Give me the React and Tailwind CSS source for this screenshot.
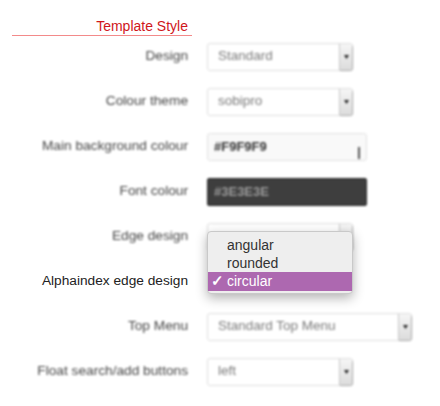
import React from "react";

const font = { fontFamily: '"Liberation Sans", Arial, sans-serif' };

function Arrow() {
  return (
    <div className="w-[13px] h-full border-l border-[#c8c8c8] bg-gradient-to-b from-[#f6f6f6] to-[#dcdcdc] rounded-r-[3px] flex items-center justify-center shadow-[1px_1px_1px_rgba(0,0,0,0.25)]">
      <svg width="5" height="4" viewBox="0 0 5 4">
        <path d="M0 0 L5 0 L2.5 4 Z" fill="#222" />
      </svg>
    </div>
  );
}

function SelectBox({ value, width }) {
  return (
    <div className={`${width} h-[28px] bg-white border border-[#dedede] rounded-[3px] flex items-center justify-between`}>
      <span className="pl-[10px] text-[13.5px] text-[#7a7a7a]">{value}</span>
      <Arrow />
    </div>
  );
}

function Row({ label, children, sharp }) {
  return (
    <div className="flex items-center h-[45px]">
      <div className={`w-[188px] text-right text-[13.7px] ${sharp ? "text-[#222]" : "text-[#444] blur-[1.3px]"}`}>{label}</div>
      <div className="ml-[19px]">{children}</div>
    </div>
  );
}

export default function App() {
  return (
    <div className="w-[440px] h-[406px] bg-white overflow-hidden" style={font}>
      <div className="ml-[12px] w-[180px] h-[36px] flex items-end justify-end pr-[4px] pb-[2px] border-b border-[#f38a8a]">
        <span className="text-[14px] text-[#d0161b] leading-none">Template Style</span>
      </div>
      <div className="-mt-[2px] flex flex-col">
        <Row label="Design">
          <div className="blur-[1.3px]"><SelectBox value="Standard" width="w-[146px]" /></div>
        </Row>
        <Row label="Colour theme">
          <div className="blur-[1.3px]"><SelectBox value="sobipro" width="w-[146px]" /></div>
        </Row>
        <Row label="Main background colour">
          <div className="blur-[1.3px] relative w-[160px] h-[28px] bg-[#f9f9f9] border border-[#e2e2e2] rounded-[3px] flex items-center">
            <span className="pl-[6px] text-[13px] font-bold text-[#333]">#F9F9F9</span>
            <div className="absolute right-[6px] bottom-[1px] w-[2px] h-[12px] bg-[#555]"></div>
          </div>
        </Row>
        <Row label="Font colour">
          <div className="blur-[1.3px] w-[160px] h-[28px] bg-[#3e3e3e] border border-[#2a2a2a] rounded-[2px] flex items-center">
            <span className="pl-[6px] text-[13px] font-bold text-[#9a9a9a]">#3E3E3E</span>
          </div>
        </Row>
        <Row label="Edge design">
          <div className="relative">
            <div className="blur-[1px]"><SelectBox value="" width="w-[146px]" /></div>
            <div className="absolute z-10 left-0 top-[8px] w-[146px] h-[63px] bg-[#eeeeee] border border-[#c9c9c9] rounded-[4px] shadow-[0_4px_12px_rgba(0,0,0,0.3)] pt-[4px] text-[14px] leading-[18px]">
              <div className="pl-[19px] text-[#333]">angular</div>
              <div className="pl-[19px] text-[#333]">rounded</div>
              <div className="flex items-center h-[19px] bg-[#ad68b0] text-white">
                <span className="w-[19px] pl-[3px] text-[15px] font-bold">✓</span>
                <span>circular</span>
              </div>
            </div>
          </div>
        </Row>
        <Row label="Alphaindex edge design" sharp>
          <div className="w-[146px] h-[28px]"></div>
        </Row>
        <Row label="Top Menu">
          <div className="blur-[1.3px]"><SelectBox value="Standard Top Menu" width="w-[205px]" /></div>
        </Row>
        <Row label="Float search/add buttons">
          <div className="blur-[1.3px]"><SelectBox value="left" width="w-[146px]" /></div>
        </Row>
      </div>
    </div>
  );
}
